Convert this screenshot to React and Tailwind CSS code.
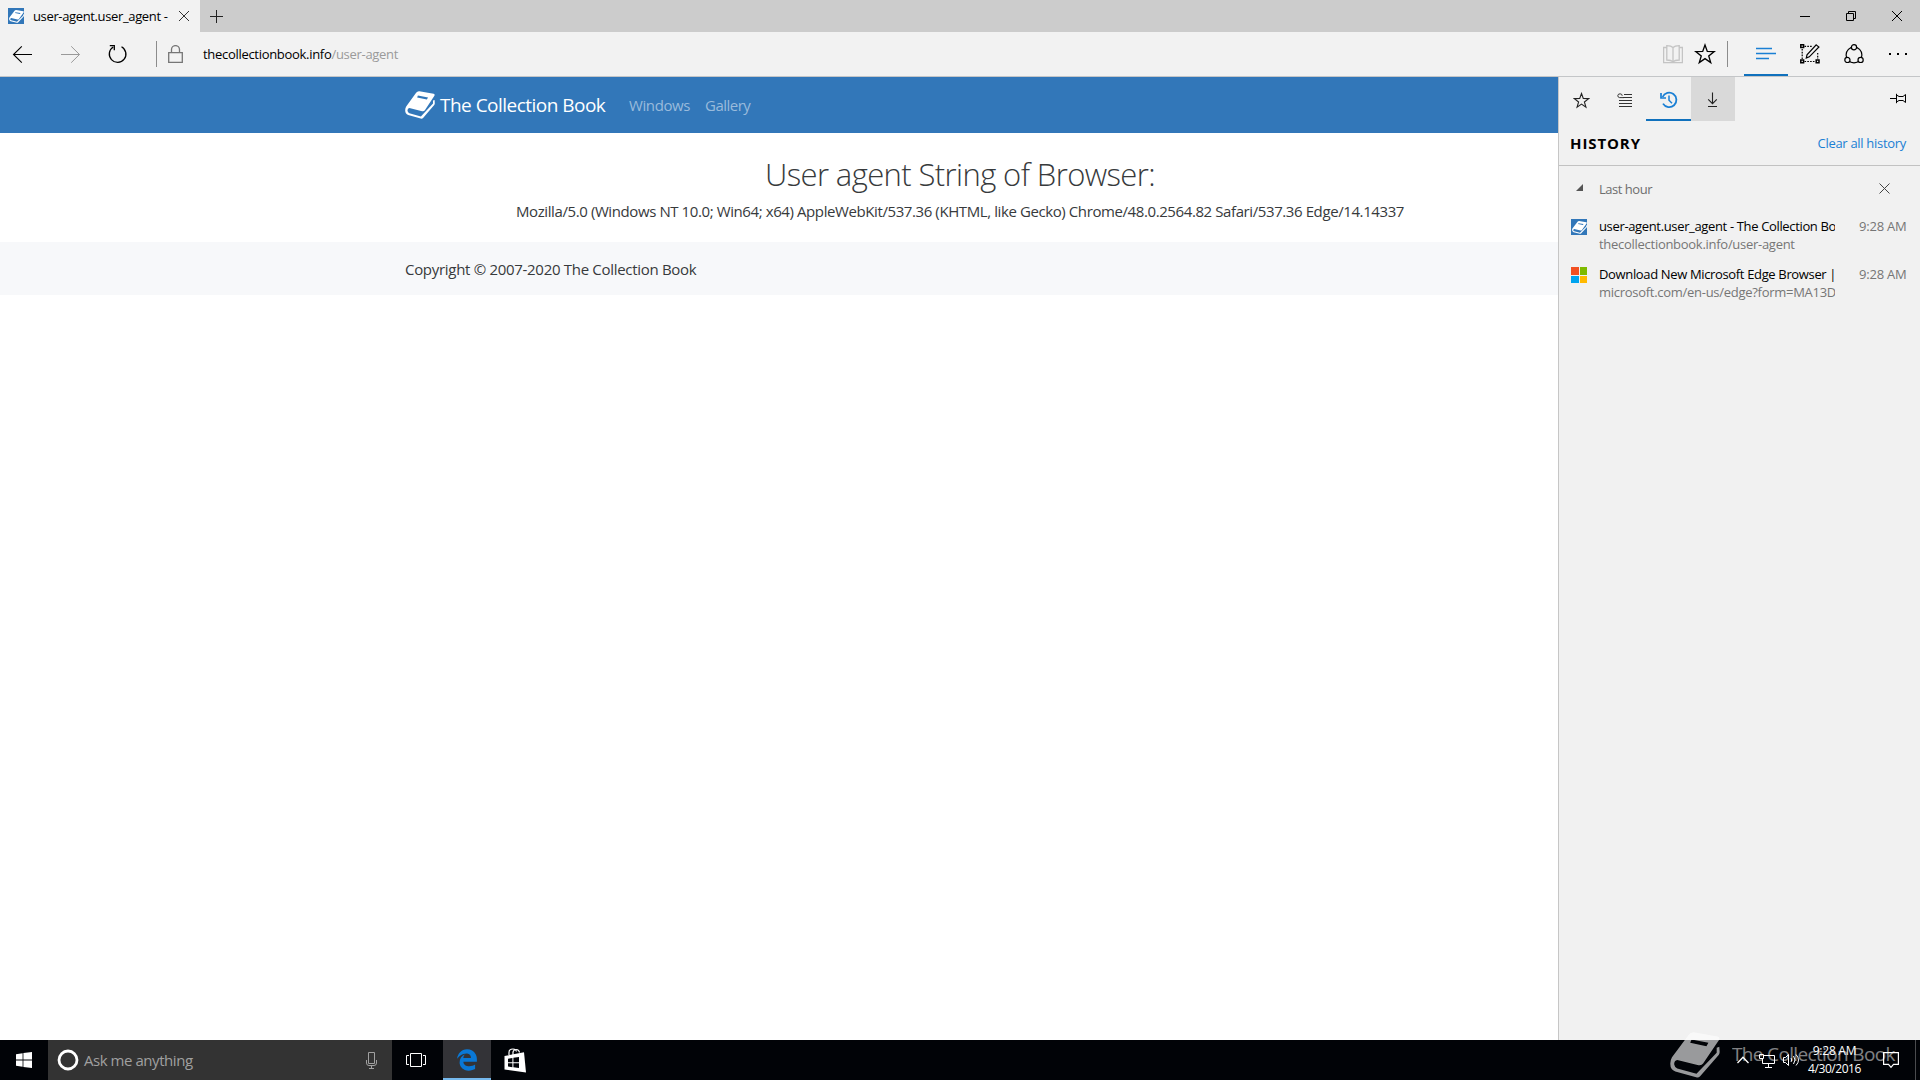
import { FaEdgeLegacy } from 'react-icons/fa'

const history = [
  {
    icon: 'book',
    title: 'user-agent.user_agent - The Collection Book',
    url: 'thecollectionbook.info/user-agent',
    time: '9:28 AM',
  },
  {
    icon: 'microsoft',
    title: 'Download New Microsoft Edge Browser | Microsoft',
    url: 'microsoft.com/en-us/edge?form=MA13DL',
    time: '9:28 AM',
  },
]

function BookLogo({ className }) {
  return (
    <svg viewBox="90 36 151 140" className={className} fill="none" preserveAspectRatio="none">
      <path
        fill="currentColor"
        fillRule="evenodd"
        d="M162 37 L234 50 Q242 52 238 60 L190 132 Q185 139 176 137 L112 121 Q101 124 103 136 Q104 144 112 147 L170 163 L231 99 L231 84 L239 81 L240 97 Q240 102 237 106 L181 171 Q176 176 169 174 L106 156 Q90 150 91 131 Q91 122 96 113 L146 45 Q152 36 162 37 Z M155 59 L151 69 L200 79 L206 69 Z"
      />
    </svg>
  )
}

function Favicon({ icon }) {
  if (icon === 'microsoft') {
    return (
      <div className="grid size-4 grid-cols-[7.5px_7.5px] grid-rows-[7.5px_7.5px] gap-px">
        <span className="bg-[#f25022]" />
        <span className="bg-[#7fba00]" />
        <span className="bg-[#00a4ef]" />
        <span className="bg-[#ffb900]" />
      </div>
    )
  }
  return (
    <div className="flex size-4 shrink-0 items-center justify-center bg-[#3277b9]">
      <BookLogo className="h-[13px] w-[15px] text-white" />
    </div>
  )
}

function Icon({ w, h, className = '', sw = 1, children }) {
  return (
    <svg
      width={w}
      height={h}
      viewBox={`0 0 ${w} ${h}`}
      className={`shrink-0 ${className}`}
      fill="none"
      stroke="currentColor"
      strokeWidth={sw}
    >
      {children}
    </svg>
  )
}

function StarIcon({ size, sw }) {
  return (
    <svg width={size} height={size} viewBox="0 0 20 20" fill="none" stroke="currentColor" strokeWidth={sw}>
      <path d="M10 1.8 L12.1 7.7 L18.4 7.8 L13.4 11.7 L15.2 17.8 L10 14.2 L4.8 17.8 L6.6 11.7 L1.6 7.8 L7.9 7.7 Z" />
    </svg>
  )
}

function TitleBar() {
  return (
    <div className="flex h-8 bg-[#cccccc]">
      <div className="flex w-[200px] items-center bg-[#f2f2f2] pl-2">
        <Favicon icon="book" />
        <span className="ml-[9px] w-[140px] overflow-hidden pt-px text-[13px] tracking-[-0.36px] whitespace-nowrap">
          user-agent.user_agent -
        </span>
        <Icon w={12} h={12} className="ml-[5px] text-[#333]">
          <path d="M1 1 L11 11 M11 1 L1 11" />
        </Icon>
      </div>
      <div className="flex w-8 items-center justify-center text-[#222]">
        <Icon w={13} h={13}>
          <path d="M6.5 0 V13 M0 6.5 H13" />
        </Icon>
      </div>
      <div className="flex-1" />
      <div className="flex">
        <div className="flex w-[46px] items-center justify-center">
          <Icon w={10} h={10}>
            <path d="M0 5.5 H10" />
          </Icon>
        </div>
        <div className="flex w-[46px] items-center justify-center">
          <Icon w={10} h={10}>
            <path d="M0.5 2.5 H7.5 V9.5 H0.5 Z M2.5 2 V0.5 H9.5 V7.5 H8" />
          </Icon>
        </div>
        <div className="flex w-[46px] items-center justify-center">
          <Icon w={10} h={10}>
            <path d="M0 0 L10 10 M10 0 L0 10" />
          </Icon>
        </div>
      </div>
    </div>
  )
}

function Toolbar() {
  return (
    <div className="flex h-[45px] items-center border-b border-[#c4c6c8] bg-[#f2f2f2]">
      <Icon w={20} h={19} sw={1.1} className="ml-3">
        <path d="M1.5 9.5 H20 M9.8 1.3 L1.5 9.5 L9.8 17.7" />
      </Icon>
      <Icon w={20} h={19} sw={1} className="ml-[29px] text-[#9a9a9a]">
        <path d="M0 9.5 H18.5 M10.2 1.3 L18.5 9.5 L10.2 17.7" />
      </Icon>
      <Icon w={20} h={20} sw={1.3} className="ml-[27px]">
        <path d="M13.5 2.7 A8.3 8.3 0 1 1 5.2 3" />
        <path d="M1.8 1.6 H6.3 V6.2" />
      </Icon>
      <div className="ml-7 h-[26px] w-px bg-[#8c8c8c]" />
      <Icon w={15} h={18} sw={1.3} className="ml-[11px] text-[#767676]">
        <path d="M0.7 7.6 H14.3 V17.3 H0.7 Z M3.5 7.6 V4.6 A4 4 0 0 1 11.5 4.6 V7.6" />
      </Icon>
      <div className="ml-5 flex-1 pt-0.5 text-[13px] tracking-[-0.3px]">
        thecollectionbook.info<span className="text-[#9a9a9a]">/user-agent</span>
      </div>
      <Icon w={20} h={19} sw={1.3} className="text-[#c4c4c4]">
        <path d="M4 2.5 H0.6 V17.6 H19.4 V2.5 H16" />
        <path d="M10 2.6 C8.5 1 6 0.7 3.8 0.7 V15 C6 15 8.5 15.3 10 16.8 C11.5 15.3 14 15 16.2 15 V0.7 C14 0.7 11.5 1 10 2.6 V17" />
      </Icon>
      <div className="ml-[11px]">
        <StarIcon size={22} sw={1.2} />
      </div>
      <div className="ml-[11px] h-[26px] w-px bg-[#8c8c8c]" />
      <div className="ml-4 flex h-full w-11 items-center justify-center border-b-2 border-[#1071bd]">
        <Icon w={20} h={13} sw={1.4} className="text-[#1a7fd4]">
          <path d="M0 1.5 H16 M0 6.5 H20 M0 11.5 H13" />
        </Icon>
      </div>
      <div className="flex w-11 items-center justify-center">
        <Icon w={20} h={20}>
          <path d="M4.5 2.3 H12.5 M4.5 17.5 H15.5 M2.2 5 V15 M17.7 9 V15" strokeWidth="1.2" strokeDasharray="1.6 1.2" />
          <path d="M0.8 0.8 H3.6 V3.6 H0.8 Z M0.8 16 H3.6 V18.8 H0.8 Z M16.2 16 H19 V18.8 H16.2 Z" strokeWidth="1.5" />
          <path d="M16.2 0.9 L18.9 3 L9.3 12.8 L6.3 14 L7 10.8 Z" strokeWidth="1.2" />
        </Icon>
      </div>
      <div className="flex w-11 items-center justify-center">
        <Icon w={20} h={20} sw={1.2}>
          <circle cx="10" cy="11" r="7.9" />
          <circle cx="10" cy="3.3" r="2.6" fill="#f2f2f2" />
          <circle cx="3.4" cy="15.9" r="2.6" fill="#f2f2f2" />
          <circle cx="16.6" cy="15.9" r="2.6" fill="#f2f2f2" />
        </Icon>
      </div>
      <div className="flex w-11 items-center justify-center gap-[6px]">
        <span className="size-[2px] bg-black" />
        <span className="size-[2px] bg-black" />
        <span className="size-[2px] bg-black" />
      </div>
    </div>
  )
}

function Page() {
  return (
    <main className="min-w-0 flex-1 overflow-hidden bg-white text-[#373a3c]">
      {/* the page keeps its full width, the hub pane covers the right side */}
      <div className="w-[1920px]">
        <nav className="flex h-14 items-center bg-[#3277b9] pl-[405px]">
          <BookLogo className="h-7 w-[30px] text-white" />
          <span className="ml-[5px] w-[166px] text-[19px] tracking-[-0.52px] whitespace-nowrap text-white">
            The Collection Book
          </span>
          <span className="ml-[23px] w-[61px] text-[15px] tracking-[-0.4px] text-[#99bbdc]">Windows</span>
          <span className="ml-[15px] text-[15px] tracking-[-0.5px] text-[#99bbdc]">Gallery</span>
        </nav>
        <section className="h-[109px] pt-[22px] text-center">
          <h1 className="text-[31px] leading-[38px] font-light tracking-[-0.6px]">User agent String of Browser:</h1>
          <p className="mt-[6px] text-[15px] leading-6 tracking-[-0.404px]">
            Mozilla/5.0 (Windows NT 10.0; Win64; x64) AppleWebKit/537.36 (KHTML, like Gecko) Chrome/48.0.2564.82
            Safari/537.36 Edge/14.14337
          </p>
        </section>
        <footer className="flex h-[53px] items-center bg-[#f7f8fa] pt-px pl-[405px] text-[15px] tracking-[-0.3px]">
          Copyright © 2007-2020 The Collection Book
        </footer>
      </div>
    </main>
  )
}

function HubPane() {
  return (
    <aside className="w-[362px] border-l border-[#c6c6c6] bg-[#f1f1f1]">
      <div className="flex h-11">
        <div className="flex w-11 items-center justify-center pt-0.5 text-[#222]">
          <StarIcon size={17} sw={1.3} />
        </div>
        <div className="flex w-[43px] items-center justify-center pt-px pl-px text-[#333]">
          <Icon w={16} h={14}>
            <path d="M7 1.5 H15 M6 4.5 H15 M2 7.5 H15 M2 10.5 H15 M2 13.5 H15" />
            <path d="M5.2 2.8 A2.2 1.9 0 1 0 2.6 4.6 H7" />
          </Icon>
        </div>
        <div className="flex w-[45px] items-center justify-center border-b-2 border-[#1071bd] pt-[3px] text-[#1a7fd4]">
          <Icon w={18} h={18} sw={1.8}>
            <path d="M2.6 6 A7.2 7.2 0 1 1 3 12.6" />
            <path d="M1 2 V7 H6" strokeWidth="1.7" />
            <path d="M9 4.6 V9.3 L12 12.2" strokeWidth="1.5" />
          </Icon>
        </div>
        <div className="flex w-11 items-center justify-center bg-[#d9d9d9] pt-0.5 pr-px text-[#222]">
          <Icon w={11} h={16} sw={1.1}>
            <path d="M5.5 0.5 V11.5 M1.2 7.3 L5.5 11.6 L9.8 7.3 M1 14.5 H10" />
          </Icon>
        </div>
        <div className="flex flex-1 items-center justify-end pr-3.5 pb-px">
          <Icon w={16} h={11}>
            <path d="M0 5.5 H6.5 M6.5 0.8 V10.2 M6.5 2 L9 3.5 H13 L15.5 1.5 V9.5 L13 7.5 H9 L6.5 9" />
          </Icon>
        </div>
      </div>
      <div className="flex h-[45px] items-center justify-between border-b border-[#c2c2c2] pr-3.5 pl-[11px]">
        <h2 className="text-[15px] font-bold tracking-[0.9px] text-black">HISTORY</h2>
        <span className="pt-0.5 text-[13px] tracking-[-0.3px] text-[#1a7fd4]">Clear all history</span>
      </div>
      <div className="flex h-[45px] items-center pl-[17px] text-[#6e6e6e]">
        <svg width="7" height="7" className="mb-0.5">
          <path d="M7 0 V7 H0 Z" fill="#555" />
        </svg>
        <span className="ml-4 flex-1 pt-0.5 text-[13px] tracking-[-0.48px]">Last hour</span>
        <Icon w={11} h={11} className="mr-[30px] text-[#444]">
          <path d="M0.5 0.5 L10.5 10.5 M10.5 0.5 L0.5 10.5" />
        </Icon>
      </div>
      {history.map((item) => (
        <div key={item.title} className="flex h-12 pt-[6px] pl-3 text-[13px] leading-[18px]">
          <div className="w-[28px] pt-0.5">
            <Favicon icon={item.icon} />
          </div>
          <div className="w-[236px] overflow-hidden whitespace-nowrap">
            <div className="tracking-[-0.35px] text-black">{item.title}</div>
            <div className="tracking-[-0.28px] text-[#767676]">{item.url}</div>
          </div>
          <span className="ml-6 tracking-[-0.2px] text-[#767676]">{item.time}</span>
        </div>
      ))}
    </aside>
  )
}

function Taskbar() {
  return (
    <div className="relative flex h-10 bg-[#010307] text-white">
      <div className="flex w-12 items-center justify-center">
        <svg width="16" height="16" viewBox="0 0 16 16" fill="#fff">
          <path d="M0 2.2 L6.6 1.2 V7.6 H0 Z M7.4 1.1 L16 0 V7.6 H7.4 Z M0 8.4 H6.6 V14.8 L0 13.8 Z M7.4 8.4 H16 V16 L7.4 14.9 Z" />
        </svg>
      </div>
      <div className="flex w-[344px] items-center bg-[#333333] pr-[15px] pl-[9px]">
        <Icon w={22} h={22} sw={2.8}>
          <circle cx="11" cy="11" r="9" />
        </Icon>
        <span className="ml-[5px] flex-1 text-[15px] tracking-[-0.45px] text-[#a0a0a0]">Ask me anything</span>
        <Icon w={11} h={17} className="text-[#a0a0a0]">
          <path d="M2.5 0.5 H8.5 V11.5 H2.5 Z M0.5 8 V11 Q0.5 13.5 3 13.5 H8 Q10.5 13.5 10.5 11 V8 M5.5 13.5 V16 M3 16.5 H8" />
        </Icon>
      </div>
      <div className="flex w-[51px] items-center justify-center pr-[3px]">
        <Icon w={20} h={14}>
          <path d="M4.5 0.5 H15.5 V13.5 H4.5 Z M3 2.5 H0.5 V11.5 H3 M17 2.5 H19.5 V11.5 H17" />
        </Icon>
      </div>
      <div className="flex w-12 items-center justify-center border-b-2 border-[#76b9ed] bg-[#333337] pt-0.5">
        <FaEdgeLegacy className="size-[22px] text-[#0a78d6]" />
      </div>
      <div className="flex w-12 items-center justify-center">
        <svg width="22" height="25" viewBox="0 0 22 25">
          <path d="M5 7 V4.5 Q5 1 9 1 Q12 1 12.5 3.5 M9 7 V4 Q9.5 1.5 12.5 1.5 Q15 1.5 15.5 4.5" stroke="#fff" fill="none" strokeWidth="1.2" />
          <path d="M0.5 8 L20 4.2 L22 24.5 L0.5 21.5 Z" fill="#fff" />
          <path d="M4 10.7 L8.4 10 V14.2 H4 Z M9.4 9.8 L15 9 V14.2 H9.4 Z M4 15.2 H8.4 V19.2 L4 18.6 Z M9.4 15.2 H15 V20.1 L9.4 19.3 Z" fill="#010307" />
        </svg>
      </div>
      <div className="flex-1" />
      <div className="flex items-center">
        <Icon w={12} h={8} sw={1.3}>
          <path d="M0.5 7 L6 1.2 L11.5 7" />
        </Icon>
        <Icon w={16} h={14} className="mt-0.5 ml-[10px]">
          <path d="M5 1.5 H15.5 V9.5 H3.5 V5 M0.5 0.5 H4.5 V4.5 H0.5 Z M9.5 9.5 V13 M6 13.5 H13" />
        </Icon>
        <Icon w={17} h={14} className="ml-2">
          <path d="M0.5 4.5 H2.5 L5.5 1.5 V12.5 L2.5 9.5 H0.5 Z M8 5 Q9.5 7 8 9 M10.5 3 Q13.5 7 10.5 11 M13 1.5 Q18 7 13 12.5" />
        </Icon>
        <div className="ml-2 w-[53px] text-center text-[12px] leading-[18px] whitespace-nowrap">
          <div className="tracking-[-0.25px]">9:28 AM</div>
          <div className="tracking-[-0.45px]">4/30/2016</div>
        </div>
        <Icon w={16} h={17} sw={1.2} className="ml-[22px]">
          <path d="M0.6 0.6 H15.4 V12.4 H10.5 L8 15.4 L5.5 12.4 H0.6 Z" />
        </Icon>
        <div className="ml-4 h-10 w-[5px] border-l border-[#4a4b4e]" />
      </div>
      {/* watermark */}
      <div className="absolute -top-2 left-[1670px] flex items-start text-white">
        <BookLogo className="h-[46px] w-[50px] opacity-60" />
        <span className="ml-3 pt-[9px] text-[19px] leading-[26px] tracking-[-0.65px] whitespace-nowrap opacity-50">
          The Collection Book
        </span>
      </div>
    </div>
  )
}

export default function App() {
  return (
    <div className="flex h-[1080px] w-[1920px] flex-col overflow-hidden bg-white font-['Open_Sans','Noto_Sans',sans-serif] text-black">
      <TitleBar />
      <Toolbar />
      <div className="flex min-h-0 flex-1">
        <Page />
        <HubPane />
      </div>
      <Taskbar />
    </div>
  )
}
